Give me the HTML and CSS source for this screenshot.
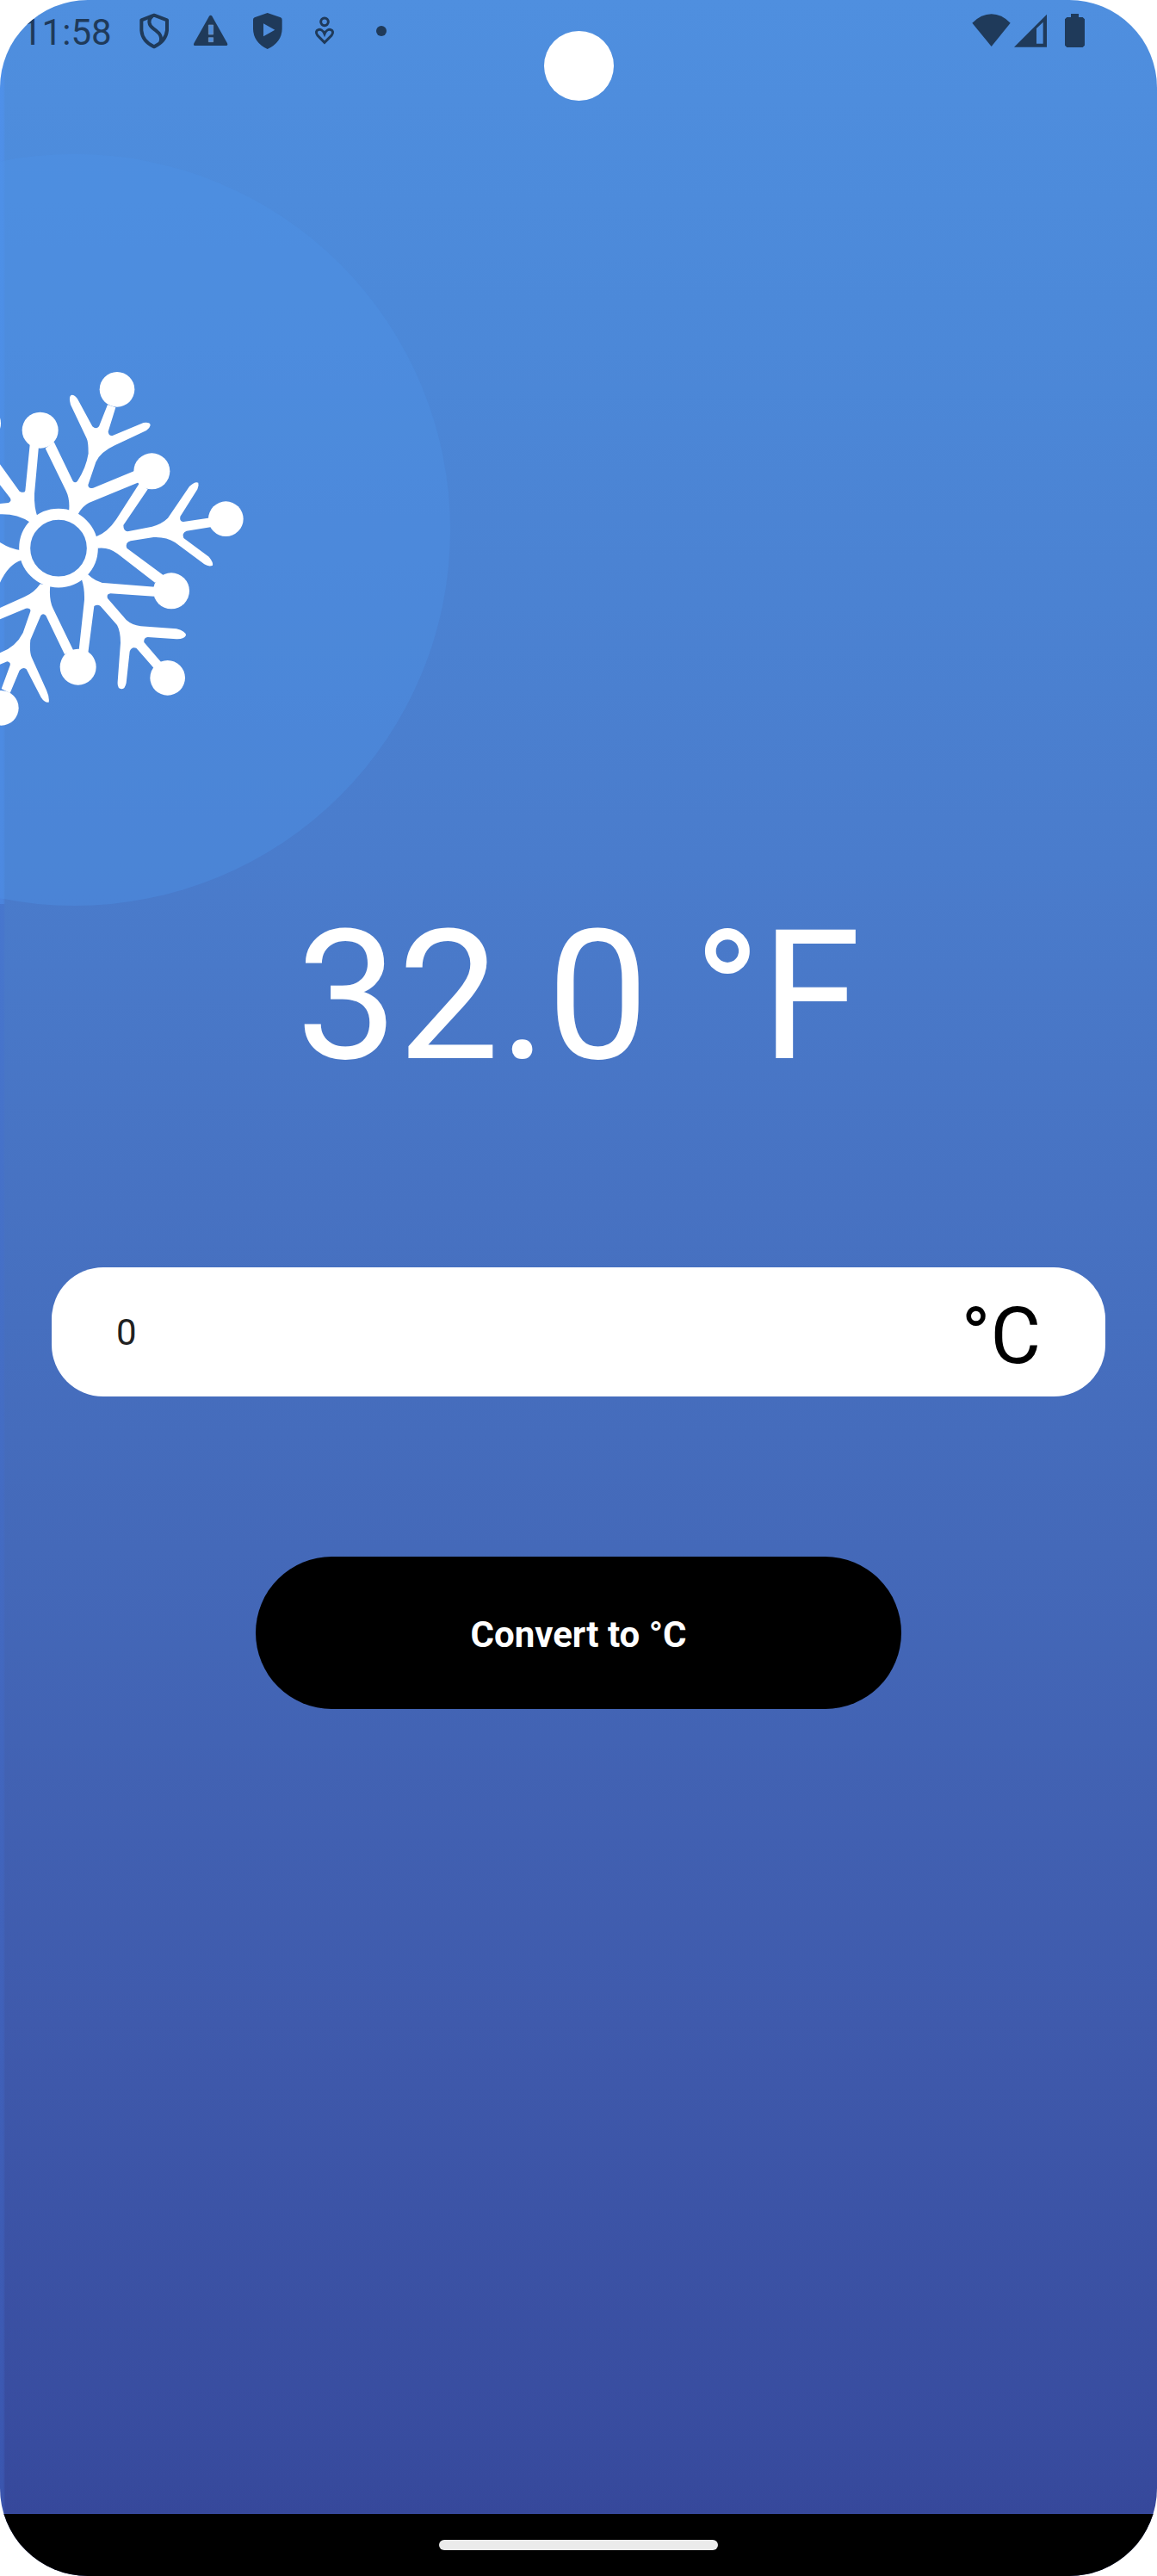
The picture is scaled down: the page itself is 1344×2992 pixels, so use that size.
FILE: index.html
```html
<!DOCTYPE html>
<html lang="en">
<head>
<meta charset="utf-8">
<title>Temperature Converter</title>
<link rel="stylesheet" href="styles.css">
</head>
<body>
<div class="screen">
  <div class="halo"></div>
  <svg class="snowflake" viewBox="0 0 900 1350" aria-hidden="true">
    <circle cx="204" cy="680" r="118" fill="none" stroke="#fff" stroke-width="39"/>
    <g fill="#fff">
      <circle cx="-59" cy="245" r="62"/>
      <circle cx="140" cy="269" r="63"/>
      <circle cx="408" cy="127" r="61"/>
      <circle cx="529" cy="412" r="63"/>
      <circle cx="787" cy="578" r="61"/>
      <circle cx="597" cy="829" r="63"/>
      <circle cx="584" cy="1132" r="61"/>
      <circle cx="272" cy="1094" r="63"/>
      <circle cx="4" cy="1237" r="61"/>
      <path d="M240 555Q245 510 230 480L158 332 188 310 254 446Q262 456 270 446 300 400 308 350 308 310 302 298L246 180Q238 150 250 146 262 146 270 160L322 256Q335 268 345 256L375 180 403 190 377 274Q378 290 392 288L500 243Q524 240 524 252 522 262 510 270L400 322Q350 345 334 380L307 460Q308 475 325 470L470 410 485 450 310 522Q285 535 272 562Z"/>
      <path d="M335 640Q375 625 405 580L485 455 515 475 430 600Q430 622 445 622L530 605Q565 595 585 575L660 465Q680 446 691 452 694 462 688 475L628 570Q625 588 640 588L735 574 738 606 650 620Q632 628 640 645L728 710Q744 730 741 740 728 746 712 736L610 660Q580 640 535 642L455 655Q435 660 442 680L570 775 540 800 410 700Q380 675 340 680Z"/>
      <path d="M305 770Q335 800 370 802L540 815 538 848 385 838Q370 840 375 855L440 930Q460 948 490 952L615 961Q648 970 648 984 640 998 615 997L515 990Q500 992 502 1008L562 1078 538 1100 475 1028Q458 1022 452 1040L440 1150Q435 1172 424 1171 408 1170 410 1145L420 1010Q420 970 408 948L350 882Q340 875 328 882L307 1045 275 1035 294 860Q295 820 285 790Z"/>
      <path d="M140 805Q120 835 85 850L0 888V928L90 890Q108 888 106 900L80 975Q55 1025 0 1045V1085L25 1075Q38 1078 35 1088L5 1170 35 1185 68 1106Q80 1092 92 1102L143 1200Q156 1220 170 1217 173 1200 162 1175L110 1060Q102 1040 106 1000L142 915Q150 905 160 915L225 1050 255 1035 185 890Q170 860 175 810Z"/>
      <path d="M75 688Q40 685 0 660V800Q30 735 75 722Z"/>
      <path d="M105 590Q60 560 0 562V525L30 522Q42 516 35 505L0 460V388L68 482Q85 490 88 480L105 310 135 325 120 490Q118 540 132 575Z"/>
    </g>
  </svg>
  <div class="camera"></div>

  <header class="status">
    <span class="clock">11:58</span>
    <svg class="icon" viewBox="0 0 144 144">
      <g fill="none" stroke="#1f3a5a" stroke-width="12" stroke-linejoin="round">
        <path d="M72 17L117 34V70Q113 108 72 127 31 108 28 70V34Z"/>
        <path d="M66 19C50 34 52 51 70 64S102 88 94 112"/>
      </g>
    </svg>
    <svg class="icon" viewBox="0 0 144 144">
      <path fill="#1f3a5a" d="M66 20Q71 14 76 20L129 115Q132 123 125 123H16Q10 123 13 115Z"/>
      <path fill="#4e8ddc" stroke="#7d9cbf" stroke-width="2" d="M64 51H80V84H64ZM64 95H80V110H64Z"/>
    </svg>
    <svg class="icon" viewBox="0 0 144 144">
      <path fill="#1f3a5a" fill-rule="evenodd" d="M71 9L117 25Q122 27 122 33V65Q121 111 71 135 22 111 21 65V33Q21 27 26 25ZM57 46V91L97 68Z"/>
    </svg>
    <svg class="icon" viewBox="0 0 144 144">
      <g fill="none" stroke="#1f3a5a" stroke-width="9">
        <circle cx="72" cy="40" r="13"/>
        <path d="M72 112L48 88C32 68 61 56 72 82 83 56 112 68 96 88Z"/>
      </g>
    </svg>
    <svg class="icon" viewBox="0 0 144 144"><circle cx="72" cy="72" r="18" fill="#1f3a5a"/></svg>
    <span class="spacer"></span>
    <svg class="icon tight" viewBox="0 0 144 144"><path fill="#1f3a5a" d="M4 44Q36 13 71 13T137 44L71 126Z"/></svg>
    <svg class="icon tight" viewBox="0 0 144 144"><path fill="#1f3a5a" fill-rule="evenodd" d="M6 128L120 14V128ZM84 63V116H107V41Z"/></svg>
    <svg class="icon tight" viewBox="0 0 144 144"><path fill="#1f3a5a" d="M60 12H87V24H101L108 31V122L101 129H46L39 122V31L46 24H60Z"/></svg>
  </header>

  <main class="converter">
    <div class="result">32.0 °F</div>
    <div class="field">
      <span class="value">0</span>
      <span class="unit">°C</span>
    </div>
    <button class="convert" type="button">Convert to °C</button>
  </main>

  <footer class="nav"><div class="handle"></div></footer>
</div>
</body>
</html>
```
FILE: styles.css
```css
* {
  box-sizing: border-box;
}

body {
  margin: 0;
  background: #fff;
  font-family: Roboto, "Liberation Sans", sans-serif;
}

.screen {
  position: relative;
  display: flex;
  flex-direction: column;
  width: 1344px;
  height: 2992px;
  overflow: hidden;
  border-radius: 102px;
  background:
    linear-gradient(90deg, rgba(80, 150, 255, 0.35) 0, rgba(80, 150, 255, 0.3) 4px, transparent 6px) 0 0 / 6px 1050px no-repeat,
    linear-gradient(90deg, rgba(66, 110, 210, 0.35) 0, rgba(66, 110, 210, 0.3) 4px, transparent 6px) 0 1050px / 6px 1870px no-repeat,
    linear-gradient(180deg, #4f8fdf 0, #4c89d9 350px, #4a7ccc 1000px, #4772c2 1400px, #4469b9 1800px, #3f5aac 2350px, #384c9f 2840px, #36489b 2920px);
}

.halo {
  position: absolute;
  left: -350px;
  top: 179px;
  width: 873px;
  height: 873px;
  border-radius: 50%;
  background: rgba(80, 148, 232, 0.38);
}

.snowflake {
  position: absolute;
  left: 0;
  top: 410px;
  width: 300px;
  height: 450px;
}

.camera {
  position: absolute;
  left: 631.5px;
  top: 35.5px;
  width: 81px;
  height: 81px;
  border-radius: 50%;
  background: #fff;
}

.status {
  position: relative;
  display: flex;
  align-items: center;
  height: 72px;
  padding: 0 72px 0 25px;
  color: #1f3a5a;
}

.clock {
  width: 130px;
  margin-top: 3px;
  font-size: 42px;
  line-height: 49px;
}

.icon {
  flex: none;
  width: 48px;
  height: 48px;
  margin-right: 18px;
}

.icon.tight {
  margin-right: 0;
}

.spacer {
  flex: 1;
}

.converter {
  position: relative;
  display: flex;
  flex: 1;
  flex-direction: column;
  align-items: center;
  padding: 962px 60px 0;
}

.result {
  color: #fff;
  font-size: 210px;
  line-height: 246px;
  white-space: nowrap;
}

.field {
  display: flex;
  align-items: center;
  justify-content: space-between;
  width: 100%;
  height: 150px;
  margin-top: 192px;
  padding: 0 75px;
  border-radius: 60px;
  background: #fff;
}

.value {
  color: #212121;
  font-size: 42px;
}

.unit {
  padding-top: 12px;
  color: #000;
  font-size: 90px;
  line-height: 106px;
}

.convert {
  width: 750px;
  height: 177px;
  margin-top: 186px;
  padding: 4px 0 0;
  border: 0;
  border-radius: 89px;
  background: #000;
  color: #fff;
  font: 700 42px Roboto, "Liberation Sans", sans-serif;
}

.nav {
  display: flex;
  align-items: center;
  justify-content: center;
  height: 72px;
  background: #000;
}

.handle {
  width: 324px;
  height: 12px;
  border-radius: 6px;
  background: #ebebeb;
}
```
